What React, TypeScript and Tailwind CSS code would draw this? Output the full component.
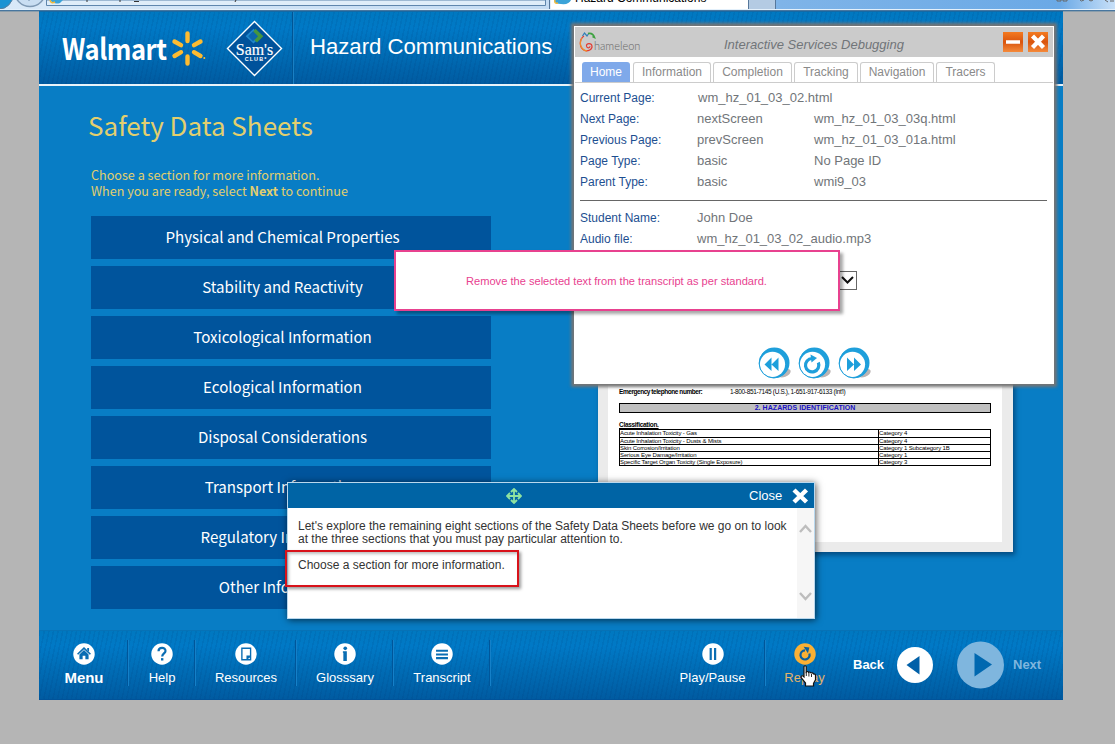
import React from "react";

const humanist = "font-['Noto_Sans_CJK_SC','Noto_Sans',sans-serif]";
const barTexture =
  "bg-[repeating-linear-gradient(102deg,rgba(0,50,110,0.10)_0_1.5px,transparent_1.5px_4.5px),linear-gradient(#0078c0_0%,#0079c6_22%,#006db6_55%,#005ba1_100%)]";

const sections = [
  "Physical and Chemical Properties",
  "Stability and Reactivity",
  "Toxicological Information",
  "Ecological Information",
  "Disposal Considerations",
  "Transport Information",
  "Regulatory Information",
  "Other Information",
];

function BrowserChrome() {
  return (
    <div className="relative h-3 w-full shrink-0 overflow-hidden bg-[linear-gradient(#b9d8f5_0,#a9cbee_8px,#dcebfa_9px,#5688b5_10px,#3a6c98_12px)]">
      <svg className="block" width="1115" height="12" viewBox="0 0 1115 12">
        <defs>
          <linearGradient id="strip" x1="0" x2="1" y1="0" y2="0">
            <stop offset="0" stopColor="#d9e9f8" />
            <stop offset="0.5" stopColor="#c3dbf3" />
            <stop offset="0.7" stopColor="#7fb4e8" />
            <stop offset="0.95" stopColor="#6aa9e6" />
            <stop offset="1" stopColor="#c8e0f8" />
          </linearGradient>
        </defs>
        <rect width="1115" height="9" fill="url(#strip)" />
        <circle cx="-1" cy="-5" r="14" fill="#1b93d3" stroke="#5c7f9e" />
        <circle cx="30" cy="-9" r="15.5" fill="#c9def2" stroke="#7f9ab5" strokeWidth="1.5" />
        <path d="M24 -4l5 5 5-5" stroke="#9db6ce" fill="none" />
        <path d="M46.500 0V5.500H545.500V0z" fill="#dfedf9" stroke="#5f86ad" />
        <path d="M50 0q4 5 10 3l3-3z" fill="#3ba3d8" />
        <path d="M50 0q1 4 5 2" stroke="#f0b93b" fill="none" strokeWidth="1.500" />
        <path d="M87 0v2M120 0v2M134 1.500h5M236 0l-1 2" stroke="#333" />
        <path d="M550.500 9V0H748.500V9z" fill="#fff" />
        <path d="M549.500 9V0M748.500 9V0M775.500 9V0" stroke="#56779b" />
        <path d="M749 0h26v9h-26z" fill="#b4cbe3" />
        <path d="M554 0q1 4 7 4q8 1 10-4z" fill="#3ba3d8" />
        <path d="M555 0q-1 4 3 3" stroke="#f0b93b" fill="none" strokeWidth="1.500" />
        <path d="M1057 0v1h4v-1M1063 0v1h4v-1M1080 0q1 2 4 0M1089 0q2 2 4 0M1105 0l3 2M1110 1h4" stroke="#666" fill="none" />
        <path d="M0 9.500H1115" stroke="#e3f0fb" />
        <path d="M0 10.500H1115" stroke="#47769f" />
        <path d="M0 11.500H1115" stroke="#8a9dab" />
        <path d="M39 11.500H1063" stroke="#1569a4" />
      </svg>
      <span className="absolute -top-[9px] left-[575px] text-[12px] leading-[14px] whitespace-nowrap text-black">
        Hazard Communications
      </span>
    </div>
  );
}

function Spark() {
  return (
    <svg width="36" height="37" viewBox="0 0 36 37" className="shrink-0">
      <g stroke="#fdbb30" strokeWidth="4.400" strokeLinecap="round">
        <path d="M17.500 3.500v7.500M17.500 26.500v7" />
        <path d="M4.500 11.500l6.500 3.700M24 15.200L30.500 11.500M4.500 26l6.500-3.800M24 22.200l6.500 3.800" />
      </g>
      <circle cx="34.300" cy="28" r="1" fill="#fdbb30" />
    </svg>
  );
}

function SamsClub() {
  return (
    <svg width="57" height="57" viewBox="0 0 58 58" className="shrink-0">
      <path d="M29 1.500L56.500 29L29 56.500L1.500 29z" fill="#00529b" stroke="#fff" strokeWidth="1.400" />
      <path d="M28 9l-8 7.500 8 7.500 3.500-3.500-4-4 4-4z" fill="#1f87cb" />
      <path d="M30 9l8 7.500-6.500 6.500-3-3 3.500-3.500-4.500-4.500z" fill="#46963f" />
      <path d="M27.500 11.500l5 5-5 5-5-5z" fill="#0c66ad" />
      <text x="29" y="35.500" textAnchor="middle" textLength="38" lengthAdjust="spacingAndGlyphs" fontFamily="Liberation Serif" fontSize="18" fill="#fff" stroke="#fff" strokeWidth=".2">Sam's</text>
      <text x="30" y="41.500" textAnchor="middle" textLength="22" fontFamily="Liberation Sans" fontWeight="bold" fontSize="5.500" fill="#fff">CLUB*</text>
    </svg>
  );
}

function Header() {
  return (
    <header className={`flex h-[74px] shrink-0 items-start border-b-2 border-[#e8f3fa] ${barTexture}`}>
      <div className="flex h-[72px] w-[254px] border-r border-[#005595] shadow-[1px_0_0_#1a80c4]">
        <span className={`${humanist} mt-[16px] ml-[23px] w-[108px] origin-left scale-x-[0.88] text-[29px] leading-[38px] font-bold tracking-[-0.5px] text-white`}>
          Walmart
        </span>
        <div className="mt-[18px]">
          <Spark />
        </div>
        <div className="mt-[8px] ml-[20px]">
          <SamsClub />
        </div>
      </div>
      <h1 className="mt-[22px] ml-[17px] text-[22.15px] leading-[26px] text-white">Hazard Communications</h1>
    </header>
  );
}

const hazards = [
  ["Acute Inhalation Toxicity - Gas", "Category 4"],
  ["Acute Inhalation Toxicity - Dusts & Mists", "Category 4"],
  ["Skin Corrosion/Irritation", "Category 1 Subcategory 1B"],
  ["Serious Eye Damage/Irritation", "Category 1"],
  ["Specific Target Organ Toxicity (Single Exposure)", "Category 3"],
];

function DataSheet() {
  return (
    <div className="mt-[214px] ml-[107px] h-[252px] w-[415px] bg-[#ebebeb] pr-[11px] pb-[10px] pl-[10px] shadow-[2px_3px_5px_rgba(0,40,80,0.6)]">
      <div className="h-full bg-white pt-[88px] pr-[11px] pl-[11px] text-[6.5px] leading-[8px] text-black">
        <div className="flex">
          <b className="w-[111px] tracking-[-0.45px] whitespace-nowrap">Emergency telephone number:</b>
          <span className="tracking-[-0.35px] whitespace-nowrap">1-800-851-7145 (U.S.), 1-651-917-6133 (Int'l)</span>
        </div>
        <div className="mt-[7px] h-[10px] border border-black bg-[#c0c0c0] text-center text-[7px] leading-[8px] font-bold tracking-[0.05px] text-[#1a12c4]">
          2. HAZARDS IDENTIFICATION
        </div>
        <div className="mt-2 h-2 leading-[8px] font-bold tracking-[-0.3px] underline">Classification.</div>
        <div className="border border-black">
          {hazards.map(([name, category], i) => (
            <div key={name} className={`flex h-[7px] text-[6px] leading-[6px] tracking-[-0.12px] ${i ? "border-t border-black" : ""}`}>
              <span className="w-[259px] border-r border-black">{name}</span>
              <span>{category}</span>
            </div>
          ))}
        </div>
      </div>
    </div>
  );
}

function Content() {
  return (
    <main className="flex h-[544px] shrink-0 bg-[#087dc5]">
      <div className="w-[452px] shrink-0 pl-[52px]">
        <h2 className={`${humanist} -ml-[3px] mt-[19px] h-[40px] text-[26px] leading-[40px] whitespace-nowrap text-[#e2cf6e]`}>
          Safety Data Sheets
        </h2>
        <p className={`${humanist} mt-[22px] h-[32px] text-[12.6px] leading-[16px] whitespace-nowrap text-[#e2cf6e]`}>
          Choose a section for more information.
          <br />
          When you are ready, select <b>Next</b> to continue
        </p>
        <div className="mt-[17px] flex flex-col gap-[7px]">
          {sections.map((name) => (
            <button key={name} className={`${humanist} h-[43px] w-[400px] bg-[#00549c] pr-[17px] pb-[2px] text-[15.1px] leading-[41px] text-white`}>
              {name}
            </button>
          ))}
        </div>
      </div>
      <DataSheet />
    </main>
  );
}

type CellProps = { label: string; cell: string; text?: string; disc?: string; children: React.ReactNode };

function FooterCell({ label, cell, text = "text-[13px] text-white", disc = "#fff", children }: CellProps) {
  return (
    <div className={`flex flex-col items-center ${cell}`}>
      <svg width="24" height="24" viewBox="0 0 24 24" className="mt-[3px]">
        <circle cx="12" cy="12" r="11.700" fill={disc} />
        {children}
      </svg>
      <span className={`mt-[5px] leading-[16px] ${text}`}>{label}</span>
    </div>
  );
}

const divided = "border-r border-[#00569a] shadow-[1px_0_0_#1580c8]";

function Footer() {
  return (
    <footer className={`flex h-[70px] shrink-0 items-start border-t border-b border-t-[#0672b6] border-b-[#00539a] pt-[9px] ${barTexture}`}>
      <FooterCell label="Menu" cell={`w-[89px] h-[46px] pl-[2px] ${divided}`} text="text-[15px] tracking-[-0.1px] font-bold text-white">
        <path d="M5 12.300L12 5.500l7 6.800" fill="none" stroke="#0a6db3" strokeWidth="1.800" />
        <path d="M15.500 5.500h2v4l-2-2zM7 12.500l5-4.800 5 4.800v5.300h-3.500v-4h-3v4H7z" fill="#0a6db3" />
      </FooterCell>
      <FooterCell label="Help" cell={`w-[67px] h-[46px] pl-[2px] ${divided}`}>
        <path d="M8.200 9c0-5 7.800-4.700 7.600-.4 0 2.600-3.600 3-3.600 6.200" fill="none" stroke="#0a6db3" strokeWidth="2.400" />
        <rect x="10.900" y="16.500" width="2.600" height="2.600" fill="#0a6db3" />
      </FooterCell>
      <FooterCell label="Resources" cell={`w-[101px] h-[46px] pl-[2px] ${divided}`}>
        <path d="M7.500 5.700h9.500v12.600H7.500z" fill="none" stroke="#0a6db3" strokeWidth="1.500" />
        <path d="M12.500 18.500v-5h4.800v1.500z M12.500 13.500h4.800l-4.800 5z" fill="#0a6db3" />
      </FooterCell>
      <FooterCell label="Glosssary" cell={`w-[97px] h-[46px] pl-[2px] ${divided}`}>
        <circle cx="12.300" cy="5.800" r="2" fill="#0a6db3" />
        <path d="M9.700 9h4.300v10.500h-3.800V10.500h-.5z" fill="#0a6db3" />
      </FooterCell>
      <FooterCell label="Transcript" cell={`w-[97px] h-[46px] pl-[2px] ${divided}`}>
        <path d="M5.500 8.500h13M5.500 12.500h13M5.500 16.500h13" stroke="#0a6db3" strokeWidth="2.200" />
      </FooterCell>
      <FooterCell label="Play/Pause" cell={`ml-[170px] w-[105px] h-[46px] pl-px ${divided}`}>
        <path d="M9.500 5.500v13M14.300 5.500v13" stroke="#0a6db3" strokeWidth="2.400" />
      </FooterCell>
      <FooterCell label="Replay" cell="w-[79px] h-[46px]" text="text-[13px] text-[#e3b36a]" disc="#fbb034">
        <path d="M16.800 11.500A5 5 0 1 1 12 8" fill="none" stroke="#0a5f9f" strokeWidth="2.400" />
        <path d="M10.500 4.200l6.300.6-1.600 6.400z" fill="#0a5f9f" />
      </FooterCell>
      <div className="mt-[1px] ml-[9px] flex h-[48px] items-center text-[13px] leading-[16px] font-bold text-white">
        <span className="w-[44px]">Back</span>
        <svg width="36" height="36" viewBox="0 0 36 36">
          <circle cx="18" cy="18" r="18" fill="#fff" />
          <path d="M9.500 18L22.500 9v18.500z" fill="#0060a8" />
        </svg>
        <svg width="47" height="48" viewBox="0 0 47 48" className="ml-6">
          <circle cx="23.500" cy="24" r="23.500" fill="#7fb6de" />
          <path d="M17.500 12L35 23.500 17.500 35.500z" fill="#0068b0" />
        </svg>
        <span className="ml-[9px] text-[#7fb6de]">Next</span>
      </div>
    </footer>
  );
}

const tabs = [
  ["Home", "w-[48px] mr-[3px]"],
  ["Information", "w-[78px] mr-[2px]"],
  ["Completion", "w-[79px] mr-[2px]"],
  ["Tracking", "w-[64px] mr-[2px]"],
  ["Navigation", "w-[74px] mr-[2px]"],
  ["Tracers", "w-[59px]"],
];

const facts = [
  ["Current Page:", "wm_hz_01_03_02.html", ""],
  ["Next Page:", "nextScreen", "wm_hz_01_03_03q.html"],
  ["Previous Page:", "prevScreen", "wm_hz_01_03_01a.html"],
  ["Page Type:", "basic", "No Page ID"],
  ["Parent Type:", "basic", "wmi9_03"],
];

function Fact({ row }: { row: string[] }) {
  return (
    <div className="flex h-[21px] items-center text-[13px] leading-[21px] whitespace-nowrap text-[#717579]">
      <span className="w-[117px] shrink-0 pt-px text-[12px] text-[#1d4f91]">{row[0]}</span>
      <span className={`w-[117px] shrink-0 ${row[0] === "Current Page:" ? "pl-px" : ""}`}>{row[1]}</span>
      <span>{row[2]}</span>
    </div>
  );
}

function RoundButton({ children }: { children: React.ReactNode }) {
  return (
    <svg width="34" height="34" viewBox="0 0 34 34" className="mr-[6px]">
      <ellipse cx="26" cy="26" rx="7" ry="4" transform="rotate(-20 26 26)" fill="#b9b4b4" />
      <circle cx="16.300" cy="15.700" r="15.200" fill="#1e9fdb" />
      <circle cx="14.500" cy="17.300" r="12.600" fill="#fff" />
      <circle cx="15.800" cy="16.300" r="14.700" fill="none" stroke="#1e9fdb" strokeWidth="1" />
      {children}
    </svg>
  );
}

function DebugPanel() {
  return (
    <section className="absolute top-[26px] left-[574px] flex h-[358px] w-[480px] flex-col border border-white bg-white shadow-[0_0_3px_3px_#757575]">
      <div className="flex h-[30px] shrink-0 items-center bg-[#cbcbcb]">
        <svg width="20" height="22" viewBox="0 0 20 22" className="ml-[4px] shrink-0">
          <path d="M5 5C0 8 0 17 5.500 19.500c3.500 1 8-1 7.500-4.500s-6-3-5.500 0 3.500 2 3.500.3" fill="none" stroke="#e23b32" strokeWidth="1.200" />
          <path d="M3 7C-.5 12 2 19 8 20" fill="none" stroke="#f08a2c" strokeWidth="1.300" />
          <path d="M3.500 5l2-3 2.500 3 2-3" fill="none" stroke="#2f7fb9" strokeWidth="1.200" />
          <path d="M9 2.500q5-1 6.500 4l-2-1" fill="none" stroke="#3da23f" strokeWidth="1.600" />
        </svg>
        <span className="mt-[7px] -ml-[5px] w-[130px] font-['Lato','Liberation_Sans',sans-serif] text-[11px] leading-[14px] font-light text-[#666]">
          hameleon
        </span>
        <span className="mt-[5px] w-[279px] text-[13px] leading-[16px] text-[#717579] italic">Interactive Services Debugging</span>
        <svg width="46" height="20" viewBox="0 0 46 20" className="shrink-0">
          <defs>
            <linearGradient id="orange" x1="0" x2="0" y1="0" y2="1">
              <stop offset="0" stopColor="#f47a20" />
              <stop offset="0.500" stopColor="#d9540d" />
              <stop offset="1" stopColor="#f58a3a" />
            </linearGradient>
          </defs>
          <rect width="20" height="20" fill="url(#orange)" />
          <rect x="25" width="20" height="20" fill="url(#orange)" />
          <path d="M3 10h14" stroke="#fff" strokeWidth="3.500" />
          <path d="M29.500 4l11 11.500M40.500 4l-11 11.500" stroke="#fff" strokeWidth="4.300" />
        </svg>
      </div>
      <nav className="mt-[5px] flex h-[21px] shrink-0 border-b border-[#ccc] pl-[7px] text-[12px] leading-[18px] text-[#8a8a8a]">
        {tabs.map(([name, size], i) => (
          <span
            key={name}
            className={`${size} h-[20px] rounded-t-[3px] text-center ${i === 0 ? "bg-[#7fa9ea] pt-px text-white" : "border border-b-0 border-[#ccc]"}`}
          >
            {name}
          </span>
        ))}
      </nav>
      <div className="mt-[4px] px-[5px]">
        {facts.map((row) => (
          <Fact key={row[0]} row={row} />
        ))}
        <div className="mt-[8px] mb-[6px] mr-px h-px bg-[#666]" />
        <Fact row={["Student Name:", "John Doe", ""]} />
        <Fact row={["Audio file:", "wm_hz_01_03_02_audio.mp3", ""]} />
      </div>
      <div className="mt-[22px] ml-[122px] flex h-[19px] w-[160px] shrink-0 justify-end border border-[#666]">
        <svg width="16" height="17" viewBox="0 0 16 17">
          <path d="M2 5l5.500 5.500L13 5" fill="none" stroke="#111" strokeWidth="2" />
        </svg>
      </div>
      <div className="mt-[57px] ml-[183px] flex">
        <RoundButton>
          <path d="M13.500 10.500v13.500l-7-6.500zM20.500 10.500v13.500l-7-6.500z" fill="#1e9fdb" />
        </RoundButton>
        <RoundButton>
          <path d="M20.300 15.500a6.700 6.700 0 1 1-6.300-4" fill="none" stroke="#1e9fdb" strokeWidth="3.200" />
          <path d="M12.500 7.500l6.500 3.500-5.500 4.500z" fill="#1e9fdb" />
        </RoundButton>
        <RoundButton>
          <path d="M9 10.500v13.500l7-6.500zM16 10.500v13.500l7-6.500z" fill="#1e9fdb" />
        </RoundButton>
      </div>
    </section>
  );
}

function Transcript() {
  return (
    <section className="absolute top-[482px] left-[287px] flex h-[137px] w-[528px] flex-col border border-[#b9d8ee] bg-white shadow-[1px_1px_7px_rgba(0,0,0,0.65)]">
      <div className="flex h-[25px] shrink-0 items-center bg-[#0064a5]">
        <svg width="16" height="16" viewBox="0 0 16 16" className="ml-[218px]" fill="none" stroke="#8fe3a0" strokeWidth="1.800">
          <path d="M8 1v14M1 8h14M5 4L8 1l3 3M5 12L8 15l3-3M4 5L1 8l3 3M12 5L15 8l-3 3" />
        </svg>
        <span className="ml-[227px] w-[43px] text-[13px] leading-[16px] text-white">Close</span>
        <svg width="17" height="16" viewBox="0 0 17 16">
          <path d="M2 2l12.500 12M14.500 2L2 14" stroke="#fff" strokeWidth="4.400" />
        </svg>
      </div>
      <div className="flex flex-1">
        <div className="w-[509px] shrink-0 pt-[12px] pl-[10px] text-[12px] leading-[13px] whitespace-nowrap text-[#333]">
          <p>
            Let's explore the remaining eight sections of the Safety Data Sheets before we go on to look
            <br />
            at the three sections that you must pay particular attention to.
          </p>
          <p className="mt-[13px]">Choose a section for more information.</p>
        </div>
        <div className="flex flex-1 flex-col justify-between bg-[#f6f6f6] pt-[16px] pb-[17px] pl-[2px]">
          <svg width="13" height="9" viewBox="0 0 13 9">
            <path d="M1 8l5.500-6L12 8" fill="none" stroke="#bdbdbd" strokeWidth="2.400" />
          </svg>
          <svg width="13" height="9" viewBox="0 0 13 9">
            <path d="M1 1l5.500 6L12 1" fill="none" stroke="#bdbdbd" strokeWidth="2.400" />
          </svg>
        </div>
      </div>
    </section>
  );
}

function HandCursor() {
  return (
    <svg className="absolute top-[665px] left-[800px]" width="17" height="22" viewBox="0 0 17 22">
      <path
        d="M4 1.500q1-1.500 2.200 0V7q1.200-1.200 2.400.4 1.300-1 2.500.6 1.400-.8 2.400 1 2-.3 2 1.700v4l-2 3.800v2.500H5.500V18L1 12.500q0-2 1.700-1.700L4 12z"
        fill="#fff"
        stroke="#111"
        strokeWidth="1.200"
      />
      <path d="M6.300 7v4M8.900 8v3.500M11.500 9v3" stroke="#111" strokeWidth="0.900" />
    </svg>
  );
}

export default function App() {
  return (
    <div className="relative flex h-[744px] w-[1115px] flex-col overflow-hidden bg-[#b5b5b5] font-['Liberation_Sans',Arial,sans-serif]">
      <BrowserChrome />
      <div className="ml-[39px] flex w-[1024px] flex-col">
        <Header />
        <Content />
        <Footer />
      </div>
      <DebugPanel />
      <div className="absolute top-[250px] left-[394px] flex h-[61px] w-[446px] items-center justify-center border-2 border-[#e8418f] bg-white pr-px text-[11.1px] leading-[14px] text-[#e8418f] shadow-[3px_3px_3px_rgba(0,0,0,0.35)]">
        Remove the selected text from the transcript as per standard.
      </div>
      <Transcript />
      <div className="absolute top-[550px] left-[285px] h-[37px] w-[234px] border-2 border-[#d8121a] shadow-[2px_2px_3px_rgba(0,0,0,0.4),inset_2px_2px_3px_rgba(0,0,0,0.25)]" />
      <HandCursor />
    </div>
  );
}
